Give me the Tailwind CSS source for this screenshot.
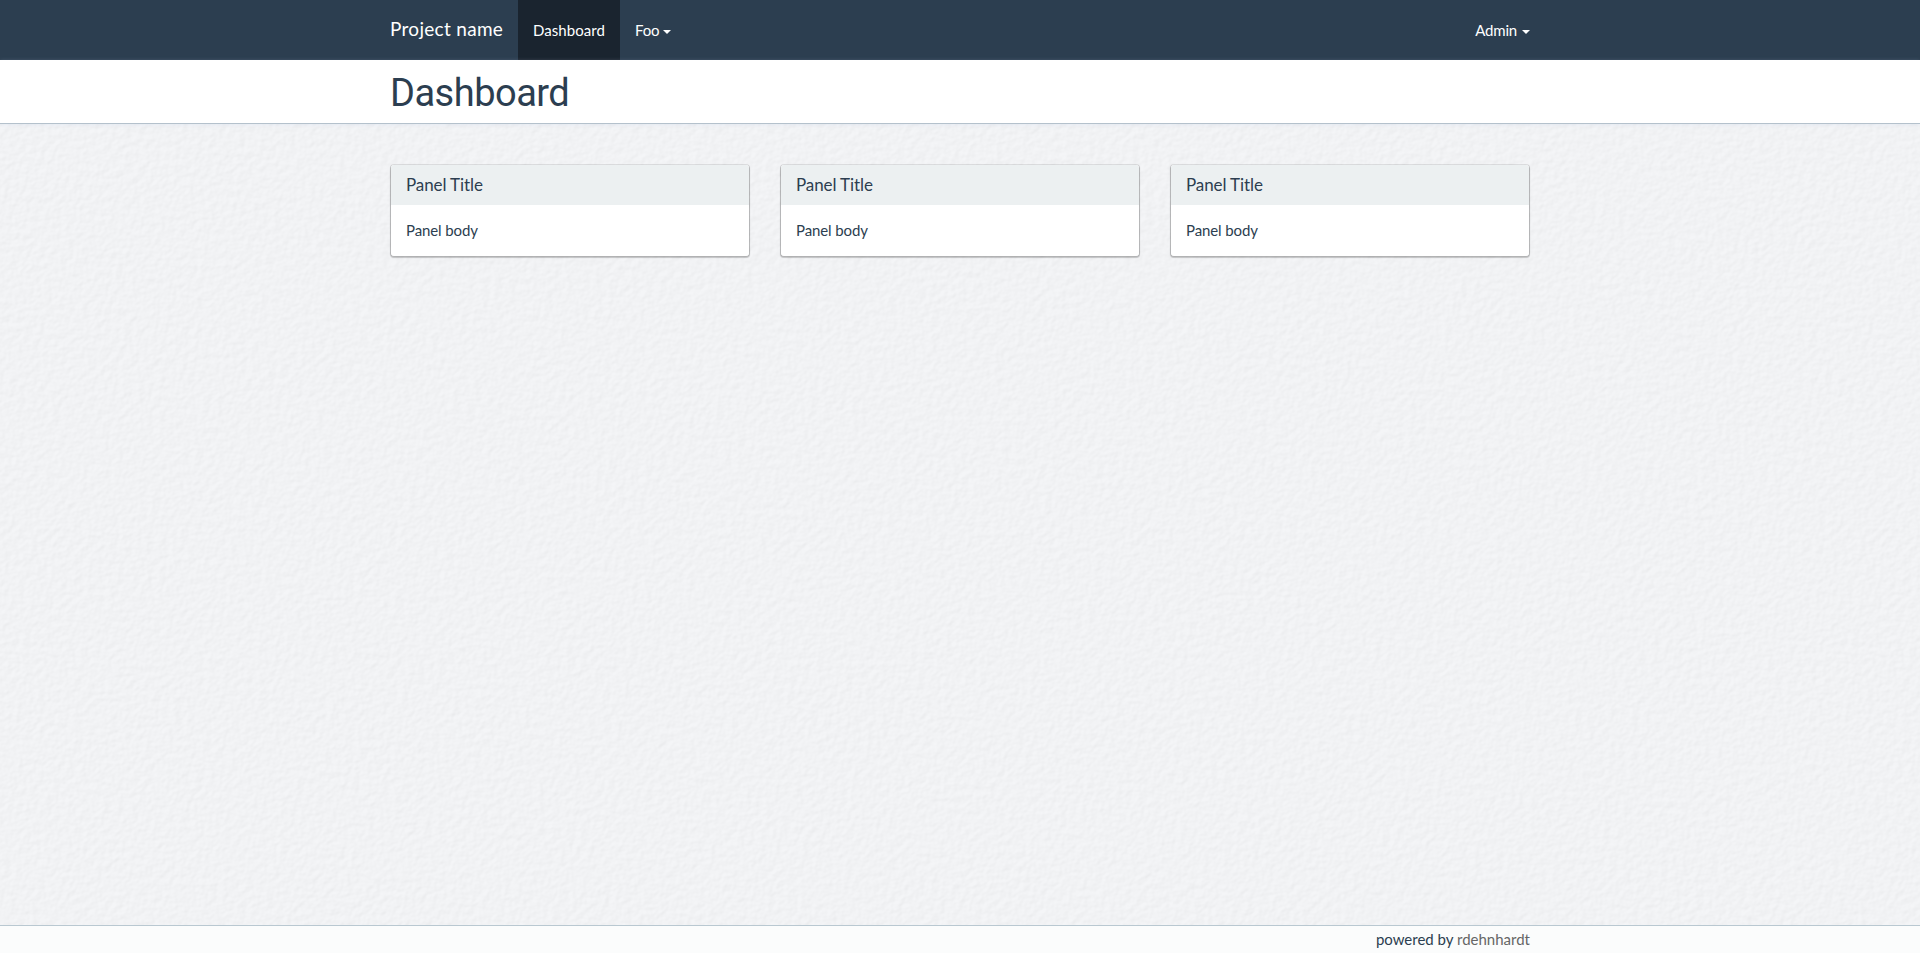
<!DOCTYPE html>
<html lang="en">
<head>
<meta charset="utf-8">
<title>Dashboard</title>
<script src="https://cdn.jsdelivr.net/npm/@tailwindcss/browser@4"></script>
</head>
<body class="relative flex h-screen flex-col overflow-hidden bg-[#f2f3f5] font-['Lato',sans-serif] text-[15px] leading-[21px] text-[#2c3e50]">
<!-- paper texture -->
<svg class="absolute inset-0 -z-10 h-full w-full opacity-20" aria-hidden="true">
  <filter id="paper" x="0" y="0" width="100%" height="100%" color-interpolation-filters="sRGB">
    <feTurbulence type="fractalNoise" baseFrequency="0.14 0.16" numOctaves="2" seed="4" result="n"/>
    <feDiffuseLighting in="n" lighting-color="#f8f9fb" surfaceScale="0.55" diffuseConstant="1.12">
      <feDistantLight azimuth="225" elevation="60"/>
    </feDiffuseLighting>
  </filter>
  <rect width="100%" height="100%" filter="url(#paper)"/>
</svg>
<nav class="h-[60px] shrink-0 bg-[#2c3e50] text-white">
  <div class="mx-auto flex h-full w-[1140px]">
    <a class="w-32 whitespace-nowrap pt-[18px] text-[19px] tracking-[0.3px]">Project name</a>
    <a class="w-[102px] bg-[#1a242f] px-[15px] pt-5 tracking-[0.05px]">Dashboard</a>
    <a class="flex px-[15px] pt-5 tracking-[-0.2px]">Foo<svg class="ml-1 mt-[10px] h-1 w-2" viewBox="0 0 8 4" fill="currentColor"><path d="M0 0h8L4 4z"/></svg></a>
    <a class="ml-auto flex pt-5 tracking-[-0.2px]">Admin<svg class="ml-[5px] mt-[10px] h-1 w-2" viewBox="0 0 8 4" fill="currentColor"><path d="M0 0h8L4 4z"/></svg></a>
  </div>
</nav>
<header class="h-16 shrink-0 border-b border-[#b4c1cc] bg-white shadow-[0_1px_4px_rgba(200,215,235,0.3)]">
  <h1 class="mx-auto w-[1140px] pt-3 font-['Roboto',sans-serif] text-[38px] leading-[43px] tracking-[-0.5px]">Dashboard</h1>
</header>
<main class="mx-auto grid w-[1140px] grow grid-cols-3 content-start gap-[30px] pt-10">
  <section class="h-[93px] overflow-hidden rounded-[4px] border border-black/8 bg-white bg-clip-padding shadow-[0_1px_1px_rgba(0,0,0,0.2)]">
    <h2 class="h-10 bg-[#ecf0f1] px-[15px] pt-[10px] text-[17px] leading-[19px] tracking-[-0.1px]">Panel Title</h2>
    <p class="p-[15px] tracking-[-0.1px]">Panel body</p>
  </section>
  <section class="h-[93px] overflow-hidden rounded-[4px] border border-black/8 bg-white bg-clip-padding shadow-[0_1px_1px_rgba(0,0,0,0.2)]">
    <h2 class="h-10 bg-[#ecf0f1] px-[15px] pt-[10px] text-[17px] leading-[19px] tracking-[-0.1px]">Panel Title</h2>
    <p class="p-[15px] tracking-[-0.1px]">Panel body</p>
  </section>
  <section class="h-[93px] overflow-hidden rounded-[4px] border border-black/8 bg-white bg-clip-padding shadow-[0_1px_1px_rgba(0,0,0,0.2)]">
    <h2 class="h-10 bg-[#ecf0f1] px-[15px] pt-[10px] text-[17px] leading-[19px] tracking-[-0.1px]">Panel Title</h2>
    <p class="p-[15px] tracking-[-0.1px]">Panel body</p>
  </section>
</main>
<footer class="h-7 shrink-0 border-t border-[#b9c8d1] bg-[#fbfcfc]">
  <p class="mx-auto w-[1140px] pt-[3px] text-right">powered by <a class="text-[#666666]">rdehnhardt</a></p>
</footer>
</body>
</html>
